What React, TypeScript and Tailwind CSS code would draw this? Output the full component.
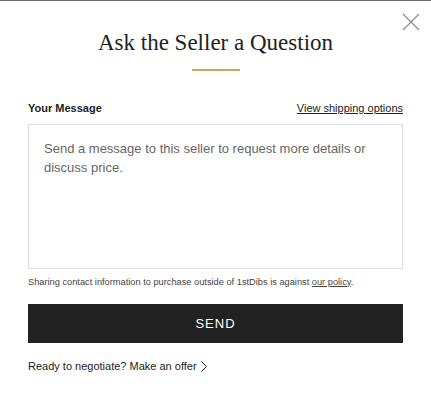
import React from "react";

export default function App() {
  return (
    <div className="w-[431px] h-[402px] bg-white border-t border-[#6b6b6b] relative" style={{ fontFamily: '"Liberation Sans", Arial, sans-serif' }}>
      <button className="absolute right-[11px] top-[12px] w-[18px] h-[18px]">
        <svg viewBox="0 0 18 18" width="18" height="18" fill="none" stroke="#8a8a8a" strokeWidth="1.2">
          <path d="M1 1L17 17M17 1L1 17" />
        </svg>
      </button>
      <div className="px-[28px] pt-[29px]">
        <h1 className="text-center text-[23px] leading-[26px] text-[#222]" style={{ fontFamily: '"Liberation Serif", "Times New Roman", serif' }}>
          Ask the Seller a Question
        </h1>
        <div className="mx-auto mt-[13px] w-[48px] h-[2px] bg-[#c2a661]" />
        <div className="mt-[29px] flex items-center justify-between">
          <span className="text-[11px] font-bold text-[#222]">Your Message</span>
          <a className="text-[11px] text-[#222] underline">View shipping options</a>
        </div>
        <div className="mt-[7px] h-[145px] border border-[#dddddd] px-[15px] pt-[14px]">
          <p className="text-[13px] leading-[19px] text-[#666]">
            Send a message to this seller to request more details or discuss price.
          </p>
        </div>
        <p className="mt-[7px] text-[9.25px] text-[#444]">
          Sharing contact information to purchase outside of 1stDibs is against <span className="underline">our policy</span>.
        </p>
        <button className="mt-[15px] w-full h-[39px] bg-[#222] text-white text-[13px] tracking-[1px]">SEND</button>
        <div className="mt-[15px] flex items-center gap-[4px] text-[11px] text-[#222]">
          <span>Ready to negotiate? Make an offer</span>
          <svg width="6" height="11" viewBox="0 0 6 11" fill="none" stroke="#222" strokeWidth="1">
            <path d="M0.5 0.5L5.5 5.5L0.5 10.5" />
          </svg>
        </div>
      </div>
    </div>
  );
}
